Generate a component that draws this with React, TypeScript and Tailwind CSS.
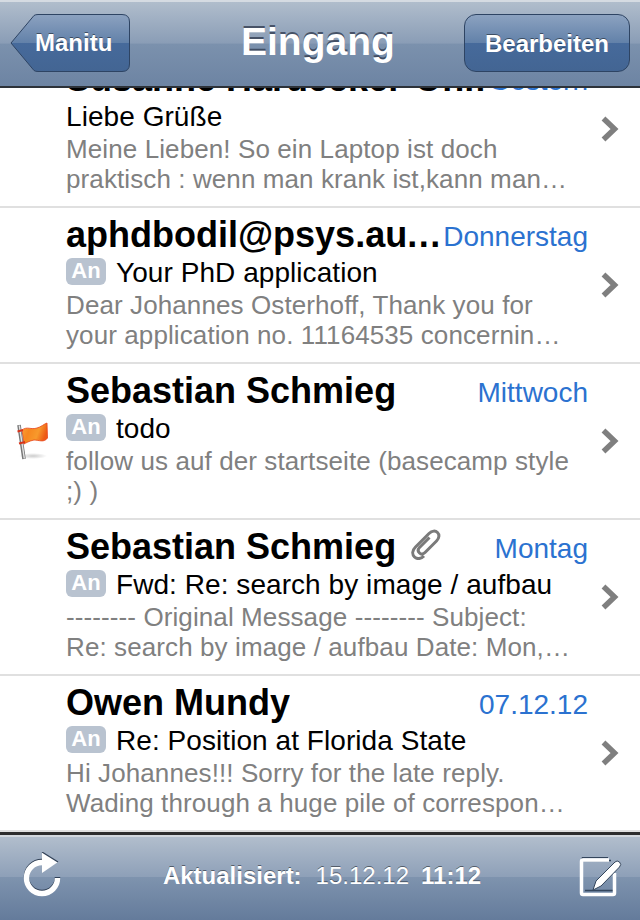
import type { ReactNode } from 'react';

type Mail = {
  sender: string;
  date: string;
  subject: string;
  lines: string[];
  badge?: boolean;
  flag?: boolean;
  clip?: boolean;
};

const mails: Mail[] = [
  { sender: 'Susanne Hardecker-Ohm', date: 'Gestern', subject: 'Liebe Grüße', lines: ['Meine Lieben! So ein Laptop ist doch', 'praktisch : wenn man krank ist,kann man…'] },
  { sender: 'aphdbodil@psys.au.…', date: 'Donnerstag', subject: 'Your PhD application', badge: true, lines: ['Dear Johannes Osterhoff, Thank you for', 'your application no. 11164535 concernin…'] },
  { sender: 'Sebastian Schmieg', date: 'Mittwoch', subject: 'todo', badge: true, flag: true, lines: ['follow us auf der startseite (basecamp style', ';) )'] },
  { sender: 'Sebastian Schmieg', date: 'Montag', subject: 'Fwd: Re: search by image / aufbau', badge: true, clip: true, lines: ['-------- Original Message -------- Subject:', 'Re: search by image / aufbau Date: Mon,…'] },
  { sender: 'Owen Mundy', date: '07.12.12', subject: 'Re: Position at Florida State', badge: true, lines: ['Hi Johannes!!! Sorry for the late reply.', 'Wading through a huge pile of correspon…'] },
];

function Chevron() {
  return (
    <svg width="20" height="28" viewBox="0 0 20 28" className="shrink-0">
      <path d="M3.500 3.500 L14.500 14 L3.500 24.500" fill="none" stroke="#7f7f7f" strokeWidth="5.500" />
    </svg>
  );
}

function Flag() {
  return (
    <svg width="34" height="42" viewBox="0 0 34 42" className="absolute left-[15px] top-[56px]">
      <defs>
        <linearGradient id="flagFill" x1="0" y1="0" x2="1" y2="0.3">
          <stop offset="0" stopColor="#f8a53c" />
          <stop offset="0.35" stopColor="#f7871f" />
          <stop offset="0.7" stopColor="#f79a2c" />
          <stop offset="1" stopColor="#ee5a14" />
        </linearGradient>
        <radialGradient id="flagShadow">
          <stop offset="0" stopColor="#000" stopOpacity="0.2" />
          <stop offset="1" stopColor="#000" stopOpacity="0" />
        </radialGradient>
      </defs>
      <ellipse cx="18" cy="36" rx="14" ry="3" fill="url(#flagShadow)" />
      <path d="M7 10 C12 6 16 10 22 8 C26 7 29 4 32 3 L32.500 18 C29 23 24 20 19 20 C14 21 11 23 9 24 Z" fill="url(#flagFill)" stroke="#e8431a" strokeWidth="0.800" />
      <path d="M4 5 L9 39" stroke="#777" strokeWidth="3.600" />
      <path d="M4.300 5.500 L9.300 38.500" stroke="#e4e4e4" strokeWidth="1.400" />
      <path d="M2.500 11.500 L8 10 M4 23.500 L10 22" stroke="#d9331a" strokeWidth="2" />
    </svg>
  );
}

function Clip() {
  return (
    <svg width="31" height="32" viewBox="0 0 31 32" fill="none" className="ml-[14px] -mt-[8px] shrink-0">
      <path
        d="M19.500 9.500 L9.500 19.500 C7.500 21.500 8 23.500 9.500 25 C11 26.500 13 26.500 15 24.500 L26.500 13 C29.500 10 29.500 6.500 27.500 4.500 C25.500 2.500 22 2.500 19 5.500 L5.500 19 C2 22.500 2 26.500 4.500 29 C7 31.500 11 31 14 28"
        stroke="#7a7a7a"
        strokeWidth="3"
      />
    </svg>
  );
}

function MailRow({ mail }: { mail: Mail }) {
  return (
    <div className="relative flex items-center h-[156px] border-b-2 border-[#e0e0e0] bg-white pl-[66px] first:-mt-[36px]">
      {mail.flag && <Flag />}
      <div className="flex-1 min-w-0 -mt-[3px]">
        <div className="flex items-center justify-between h-[38px]">
          <div className="flex items-center min-w-0 overflow-x-clip">
            <span className="text-[36px] leading-[38px] -mt-[2px] font-bold text-black whitespace-nowrap">{mail.sender}</span>
            {mail.clip && <Clip />}
          </div>
          <span className="shrink-0 pl-[3px] mt-[2px] text-[28px] leading-[38px] text-[#2b72d0]">{mail.date}</span>
        </div>
        <div className="flex items-center h-[34px] mt-[1px]">
          {mail.badge && (
            <span className="w-[40px] h-[27px] mr-[10px] -mt-[4px] shrink-0 rounded-[6px] bg-[#b9c3d0] text-white text-[22px] leading-[26px] font-bold text-center">
              An
            </span>
          )}
          <span className="text-[28px] leading-[34px] tracking-[0.06px] text-black whitespace-nowrap">{mail.subject}</span>
        </div>
        {mail.lines.map((l) => (
          <div key={l} className="text-[26px] leading-[30px] tracking-[0.1px] text-[#808080] whitespace-nowrap">
            {l}
          </div>
        ))}
      </div>
      <div className="w-[52px] shrink-0 flex justify-start pl-[12px]">
        <Chevron />
      </div>
    </div>
  );
}

function NavLabel({ children }: { children: ReactNode }) {
  return (
    <span className="relative text-white text-[24px] leading-[58px] font-bold [text-shadow:0_-1px_0_rgba(0,0,0,0.45)]">
      {children}
    </span>
  );
}

export default function App() {
  return (
    <div className="flex flex-col w-[640px] h-[920px] overflow-hidden bg-white font-['Liberation_Sans',Arial,sans-serif]">
      {/* Nav bar */}
      <div className="z-10 relative flex items-center justify-between h-[88px] shrink-0 pl-[10px] pr-[10px] pb-[2px] border-t-2 border-[#d5dbe2] border-b-2 border-b-[#2d3239] bg-[linear-gradient(#b0bdcc_0%,#8a9db6_49%,#7b91ad_50%,#6d84a3_100%)]">
        <button className="relative w-[120px] h-[58px] pl-[25px] text-left">
          <svg width="120" height="58" viewBox="0 0 120 58" className="absolute left-0 top-0">
            <defs>
              <linearGradient id="backFill" x1="0" y1="0" x2="0" y2="1">
                <stop offset="0" stopColor="#8ca2c0" />
                <stop offset="0.5" stopColor="#6281a9" />
                <stop offset="0.5" stopColor="#466a9b" />
                <stop offset="1" stopColor="#436593" />
              </linearGradient>
            </defs>
            <path d="M1 29 L24 1.500 Q25.500 0.500 28 0.500 L112 0.500 Q119.500 0.500 119.500 8 L119.500 50 Q119.500 57.500 112 57.500 L28 57.500 Q25.500 57.500 24 56.500 Z" fill="url(#backFill)" stroke="#2e4463" strokeWidth="1" />
          </svg>
          <NavLabel>Manitu</NavLabel>
        </button>
        <div className="absolute left-[241px] top-[13px] text-[39px] leading-[54px] font-bold text-white [text-shadow:0_-2px_0_rgba(45,55,75,0.75)]">
          Eingang
        </div>
        <button className="w-[166px] h-[58px] text-center rounded-[12px] border border-[#2e4463] bg-[linear-gradient(#8ca2c0_0%,#6281a9_50%,#466a9b_50%,#436593_100%)]">
          <NavLabel>Bearbeiten</NavLabel>
        </button>
      </div>

      {/* Mail list */}
      <div className="flex-1 min-h-0 overflow-hidden">
        {mails.map((m) => (
          <MailRow key={m.date} mail={m} />
        ))}
      </div>

      {/* Toolbar */}
      <div className="relative flex items-center justify-between h-[88px] shrink-0 pl-[22px] pr-[18px] border-t-[3px] border-[#2d2d2d] shadow-[inset_0_2px_0_#d3d8de] bg-[linear-gradient(#b3bfcd_0%,#8ea0b8_49%,#7e93ae_50%,#647b9b_100%)]">
        <svg width="40" height="46" viewBox="0 0 40 46" className="-mt-[5px]">
          <path d="M20 10.500 A15.500 15.500 0 1 0 35.500 26" fill="none" stroke="#2f3f55" strokeWidth="5.500" transform="translate(0 -1)" />
          <path d="M20 10.500 A15.500 15.500 0 1 0 35.500 26" fill="none" stroke="#fff" strokeWidth="5.500" />
          <path d="M20 0 L36 10 L20 21 Z" fill="#fff" />
          <path d="M20 0 L36 10" stroke="#2f3f55" strokeWidth="1.200" />
        </svg>
        <div className="text-[24px] leading-[30px] text-white whitespace-nowrap -mt-[3px] ml-[4px] [text-shadow:0_-1px_0_rgba(0,0,0,0.45)]">
          <span className="font-bold">Aktualisiert:</span>
          <span className="ml-[14px]">15.12.12</span>
          <span className="ml-[12px] font-bold">11:12</span>
        </div>
        <svg width="44" height="42" viewBox="0 0 44 42" className="-mt-[3px]">
          <path d="M30 3.500 L4 3.500 L4 37.500" fill="none" stroke="#33455c" strokeWidth="1" transform="translate(0 -1)" />
          <path d="M5 5.500 L33 5.500 M7 35.500 L35 35.500" stroke="#33455c" strokeWidth="1.500" />
          <path d="M31 5 L5 5 Q3.500 5 3.500 6.500 L3.500 38 Q3.500 39.500 5 39.500 L35 39.500 Q36.500 39.500 36.500 38 L36.500 18" fill="none" stroke="#fff" strokeWidth="3.500" />
          <path d="M15 35 L18 26 L37 7 Q39 5 41.500 7 Q44 9.500 41.500 12 L23 31 Z" fill="#fff" stroke="#33455c" strokeWidth="1" />
        </svg>
      </div>
    </div>
  );
}
